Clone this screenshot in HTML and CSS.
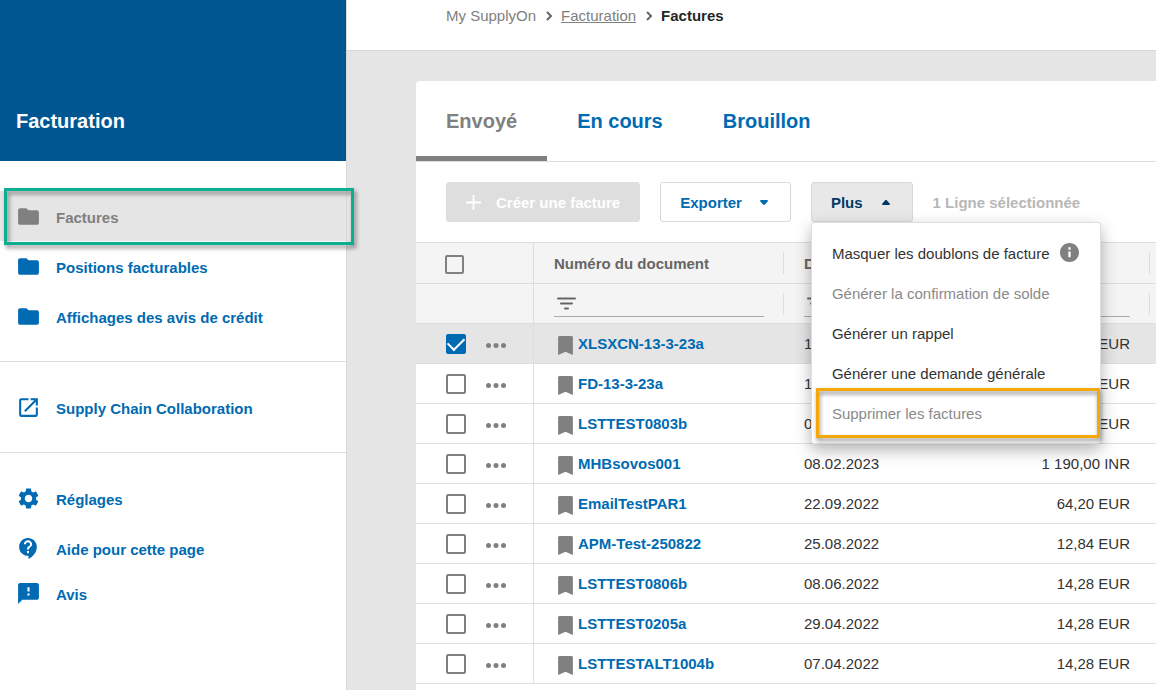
FILE: index.html
```html
<!DOCTYPE html>
<html lang="fr">
<head>
<meta charset="utf-8">
<meta name="viewport" content="width=device-width, initial-scale=1">
<title>Factures</title>
<link rel="stylesheet" href="styles.css">
</head>
<body>
<svg class="sprite" aria-hidden="true">
  <symbol id="folder" viewBox="0 0 24 24"><path d="M10 4H4c-1.1 0-1.99.9-1.99 2L2 18c0 1.1.9 2 2 2h16c1.1 0 2-.9 2-2V8c0-1.1-.9-2-2-2h-8l-2-2z"/></symbol>
  <symbol id="external" viewBox="0 0 24 24"><path d="M19 19H5V5h7V3H5c-1.11 0-2 .9-2 2v14c0 1.1.89 2 2 2h14c1.1 0 2-.9 2-2v-7h-2v7zM14 3v2h3.59l-9.83 9.83 1.41 1.41L19 6.41V10h2V3h-7z"/></symbol>
  <symbol id="gear" viewBox="0 0 24 24"><path d="M19.14 12.94c.04-.3.06-.61.06-.94 0-.32-.02-.64-.07-.94l2.03-1.58c.18-.14.23-.41.12-.61l-1.92-3.32c-.12-.22-.37-.29-.59-.22l-2.39.96c-.5-.38-1.03-.7-1.62-.94l-.36-2.54c-.04-.24-.24-.41-.48-.41h-3.84c-.24 0-.43.17-.47.41l-.36 2.54c-.59.24-1.13.57-1.62.94l-2.39-.96c-.22-.08-.47 0-.59.22L2.74 8.87c-.12.21-.08.47.12.61l2.03 1.58c-.05.3-.09.63-.09.94s.02.64.07.94l-2.03 1.58c-.18.14-.23.41-.12.61l1.92 3.32c.12.22.37.29.59.22l2.39-.96c.5.38 1.03.7 1.62.94l.36 2.54c.05.24.24.41.48.41h3.84c.24 0 .44-.17.47-.41l.36-2.54c.59-.24 1.13-.56 1.62-.94l2.39.96c.22.08.47 0 .59-.22l1.92-3.32c.12-.22.07-.47-.12-.61l-2.01-1.58zM12 15.6c-1.98 0-3.6-1.62-3.6-3.6s1.62-3.6 3.6-3.6 3.6 1.62 3.6 3.6-1.62 3.6-3.6 3.6z"/></symbol>
  <symbol id="help" viewBox="0 0 24 24"><path d="M11.5 2C6.81 2 3 5.81 3 10.5S6.81 19 11.5 19h.5v3c4.86-2.34 8-7 8-11.5C20 5.81 16.19 2 11.5 2zm1 14.5h-2v-2h2v2zm0-3.5h-2c0-3.25 3-3 3-5 0-1.1-.9-2-2-2s-2 .9-2 2h-2c0-2.21 1.79-4 4-4s4 1.79 4 4c0 2.5-3 2.75-3 5z"/></symbol>
  <symbol id="feedback" viewBox="0 0 24 24"><path d="M20 2H4c-1.1 0-1.99.9-1.99 2L2 22l4-4h14c1.1 0 2-.9 2-2V4c0-1.1-.9-2-2-2zm-7 12h-2v-2h2v2zm0-4h-2V6h2v4z"/></symbol>
  <symbol id="bookmark" viewBox="5 3 14 18"><path d="M17 3H7c-1.100 0-2 .4-2 1.200V21l7-3 7 3V4.200C19 3.400 18.100 3 17 3z"/></symbol>
  <symbol id="chevron" viewBox="0 0 7 10"><path d="M1 1l4 4-4 4" fill="none" stroke="currentColor" stroke-width="2"/></symbol>
  <symbol id="plus" viewBox="0 0 16 16"><path d="M7 0h2v7h7v2H9v7H7V9H0V7h7z"/></symbol>
  <symbol id="caret-down" viewBox="0 0 8 6"><path d="M1 0h6c1 0 1.200 1 .6 1.600L5 4.500c-.6.600-1.400.600-2 0L.4 1.600C-.2 1 0 0 1 0z"/></symbol>
  <symbol id="caret-up" viewBox="0 0 8 6"><path d="M1 5h6c1 0 1.200-1 .6-1.600L5 .5c-.6-.6-1.400-.6-2 0L.4 3.400C-.2 4 0 5 1 5z"/></symbol>
  <symbol id="filter" viewBox="0 0 19 13"><path d="M1 1.500h17M4 6.500h11M8 11.500h3" fill="none" stroke="currentColor" stroke-width="2" stroke-linecap="round"/></symbol>
  <symbol id="dots" viewBox="0 0 20 5"><circle cx="2.500" cy="2.500" r="2.500"/><circle cx="10" cy="2.500" r="2.500"/><circle cx="17.500" cy="2.500" r="2.500"/></symbol>
  <symbol id="info" viewBox="2 2 20 20"><path d="M12 2C6.480 2 2 6.480 2 12s4.480 10 10 10 10-4.480 10-10S17.520 2 12 2zm1.200 15h-2.400v-6h2.400v6zm0-8h-2.400V6.600h2.400V9z"/></symbol>
</svg>

<aside class="sidebar">
  <div class="sidebar-head"><h1 class="app-title">Facturation</h1></div>
  <nav class="nav">
    <div class="nav-group">
      <a class="nav-item selected" href="#factures"><svg class="nav-icon"><use href="#folder"/></svg>Factures</a>
      <a class="nav-item" href="#positions"><svg class="nav-icon"><use href="#folder"/></svg>Positions facturables</a>
      <a class="nav-item" href="#credits"><svg class="nav-icon"><use href="#folder"/></svg>Affichages des avis de crédit</a>
    </div>
    <div class="nav-group">
      <a class="nav-item" href="#scc"><svg class="nav-icon"><use href="#external"/></svg>Supply Chain Collaboration</a>
    </div>
    <div class="nav-group">
      <a class="nav-item" href="#reglages"><svg class="nav-icon"><use href="#gear"/></svg>Réglages</a>
      <a class="nav-item" href="#aide"><svg class="nav-icon"><use href="#help"/></svg>Aide pour cette page</a>
      <a class="nav-item compact" href="#avis"><svg class="nav-icon"><use href="#feedback"/></svg>Avis</a>
    </div>
  </nav>
</aside>

<main class="main">
  <header class="breadcrumb">
    <span>My SupplyOn</span>
    <svg class="chevron"><use href="#chevron"/></svg>
    <a class="crumb-link" href="#facturation">Facturation</a>
    <svg class="chevron"><use href="#chevron"/></svg>
    <strong class="crumb-current">Factures</strong>
  </header>

  <section class="card">
    <div class="tabs" role="tablist">
      <button class="tab active" role="tab" aria-selected="true">Envoyé</button>
      <button class="tab" role="tab" aria-selected="false">En cours</button>
      <button class="tab" role="tab" aria-selected="false">Brouillon</button>
    </div>

    <div class="toolbar">
      <button class="btn create" disabled><svg class="plus"><use href="#plus"/></svg>Créer une facture</button>
      <button class="btn">Exporter<svg class="caret"><use href="#caret-down"/></svg></button>
      <div class="dropdown">
        <button class="btn open" aria-haspopup="menu" aria-expanded="true">Plus<svg class="caret"><use href="#caret-up"/></svg></button>
        <div class="menu" role="menu">
          <button class="menu-item" role="menuitem">Masquer les doublons de facture<svg class="info"><use href="#info"/></svg></button>
          <button class="menu-item" role="menuitem" disabled>Générer la confirmation de solde</button>
          <button class="menu-item" role="menuitem">Générer un rappel</button>
          <button class="menu-item" role="menuitem">Générer une demande générale</button>
          <button class="menu-item marked" role="menuitem" disabled>Supprimer les factures</button>
        </div>
      </div>
      <span class="selection">1 Ligne sélectionnée</span>
    </div>

    <table class="grid">
      <colgroup><col class="col-select"><col class="col-number"><col><col><col class="col-rest"></colgroup>
      <thead>
        <tr>
          <th class="select"><input class="check small" type="checkbox" aria-label="Tout sélectionner"></th>
          <th class="split" scope="col">Numéro du document</th>
          <th class="split" scope="col">Date</th>
          <th class="split" scope="col">Montant</th>
          <td></td>
        </tr>
        <tr>
          <td class="select"></td>
          <td class="split"><label class="filter"><svg class="filter-icon"><use href="#filter"/></svg><input class="filter-input" type="text" aria-label="Filtrer par numéro"></label></td>
          <td class="split"><label class="filter"><svg class="filter-icon"><use href="#filter"/></svg><input class="filter-input" type="text" aria-label="Filtrer par date"></label></td>
          <td class="split"><label class="filter"><svg class="filter-icon"><use href="#filter"/></svg><input class="filter-input" type="text" aria-label="Filtrer par montant"></label></td>
          <td></td>
        </tr>
      </thead>
      <tbody>
        <tr class="picked">
          <td class="select"><div class="row-tools"><input class="check" type="checkbox" aria-label="XLSXCN-13-3-23a" checked><button class="more" aria-label="Actions"><svg class="dots"><use href="#dots"/></svg></button></div></td>
          <td><a class="doc" href="#d1"><svg class="bookmark"><use href="#bookmark"/></svg>XLSXCN-13-3-23a</a></td>
          <td>13.03.2023</td><td class="amount">14,28 EUR</td><td></td>
        </tr>
        <tr>
          <td class="select"><div class="row-tools"><input class="check" type="checkbox" aria-label="FD-13-3-23a"><button class="more" aria-label="Actions"><svg class="dots"><use href="#dots"/></svg></button></div></td>
          <td><a class="doc" href="#d2"><svg class="bookmark"><use href="#bookmark"/></svg>FD-13-3-23a</a></td>
          <td>13.03.2023</td><td class="amount">14,28 EUR</td><td></td>
        </tr>
        <tr>
          <td class="select"><div class="row-tools"><input class="check" type="checkbox" aria-label="LSTTEST0803b"><button class="more" aria-label="Actions"><svg class="dots"><use href="#dots"/></svg></button></div></td>
          <td><a class="doc" href="#d3"><svg class="bookmark"><use href="#bookmark"/></svg>LSTTEST0803b</a></td>
          <td>08.03.2023</td><td class="amount">14,28 EUR</td><td></td>
        </tr>
        <tr>
          <td class="select"><div class="row-tools"><input class="check" type="checkbox" aria-label="MHBsovos001"><button class="more" aria-label="Actions"><svg class="dots"><use href="#dots"/></svg></button></div></td>
          <td><a class="doc" href="#d4"><svg class="bookmark"><use href="#bookmark"/></svg>MHBsovos001</a></td>
          <td>08.02.2023</td><td class="amount">1 190,00 INR</td><td></td>
        </tr>
        <tr>
          <td class="select"><div class="row-tools"><input class="check" type="checkbox" aria-label="EmailTestPAR1"><button class="more" aria-label="Actions"><svg class="dots"><use href="#dots"/></svg></button></div></td>
          <td><a class="doc" href="#d5"><svg class="bookmark"><use href="#bookmark"/></svg>EmailTestPAR1</a></td>
          <td>22.09.2022</td><td class="amount">64,20 EUR</td><td></td>
        </tr>
        <tr>
          <td class="select"><div class="row-tools"><input class="check" type="checkbox" aria-label="APM-Test-250822"><button class="more" aria-label="Actions"><svg class="dots"><use href="#dots"/></svg></button></div></td>
          <td><a class="doc" href="#d6"><svg class="bookmark"><use href="#bookmark"/></svg>APM-Test-250822</a></td>
          <td>25.08.2022</td><td class="amount">12,84 EUR</td><td></td>
        </tr>
        <tr>
          <td class="select"><div class="row-tools"><input class="check" type="checkbox" aria-label="LSTTEST0806b"><button class="more" aria-label="Actions"><svg class="dots"><use href="#dots"/></svg></button></div></td>
          <td><a class="doc" href="#d7"><svg class="bookmark"><use href="#bookmark"/></svg>LSTTEST0806b</a></td>
          <td>08.06.2022</td><td class="amount">14,28 EUR</td><td></td>
        </tr>
        <tr>
          <td class="select"><div class="row-tools"><input class="check" type="checkbox" aria-label="LSTTEST0205a"><button class="more" aria-label="Actions"><svg class="dots"><use href="#dots"/></svg></button></div></td>
          <td><a class="doc" href="#d8"><svg class="bookmark"><use href="#bookmark"/></svg>LSTTEST0205a</a></td>
          <td>29.04.2022</td><td class="amount">14,28 EUR</td><td></td>
        </tr>
        <tr>
          <td class="select"><div class="row-tools"><input class="check" type="checkbox" aria-label="LSTTESTALT1004b"><button class="more" aria-label="Actions"><svg class="dots"><use href="#dots"/></svg></button></div></td>
          <td><a class="doc" href="#d9"><svg class="bookmark"><use href="#bookmark"/></svg>LSTTESTALT1004b</a></td>
          <td>07.04.2022</td><td class="amount">14,28 EUR</td><td></td>
        </tr>
      </tbody>
    </table>
  </section>
</main>
</body>
</html>
```

FILE: styles.css
```css
:root {
  --blue: #006bb3;
  --navy: #005691;
  --gray: #808080;
  --line: #dedede;
  --page: #e5e5e5;
}

* { box-sizing: border-box; }

body {
  margin: 0;
  min-height: 100vh;
  display: grid;
  grid-template-columns: 347px minmax(0, 1fr);
  background: var(--page);
  color: #333;
  font: 15px/20px "Liberation Sans", Arial, sans-serif;
}

button, input { font: inherit; color: inherit; }
button { border: 0; background: none; padding: 0; text-align: left; }
a { color: inherit; text-decoration: none; }
svg { fill: currentColor; flex: none; display: block; }
.sprite { display: none; }

/* Sidebar */
.sidebar {
  position: relative;
  z-index: 1;
  background: #fff;
  border-right: 1px solid #d8d8d8;
}
.sidebar-head {
  height: 161px;
  padding: 0 16px 28px;
  display: flex;
  align-items: flex-end;
  background: var(--navy);
  color: #fff;
}
.app-title { margin: 0; font-size: 20px; line-height: 24px; }
.nav-group { padding: 20px 0; border-bottom: 1px solid var(--line); }
.nav-group:first-child { padding-top: 30px; }
.nav-group:last-child { border-bottom: 0; }
.nav-item {
  position: relative;
  height: 50px;
  padding: 4px 16px 0;
  display: flex;
  align-items: center;
  gap: 15px;
  color: var(--blue);
  font-weight: bold;
}
.nav-item.compact { height: 40px; }
.nav-icon { width: 25px; height: 25px; margin-bottom: 4px; }
.nav-item.selected { background: var(--page); color: var(--gray); }
.nav-item.selected::after {
  content: "";
  position: absolute;
  inset: -3px -8px -4px 4px;
  border: 3px solid #0bae8e;
  filter: drop-shadow(2px 3px 2px rgba(0, 0, 0, .45));
}

/* Main column */
.main { display: flex; flex-direction: column; }
.breadcrumb {
  height: 51px;
  padding: 6px 0 0 99px;
  display: flex;
  background: #fff;
  border-bottom: 1px solid #d8d8d8;
  color: var(--gray);
}
.chevron { width: 7px; height: 10px; margin: 5px 8px 5px 10px; color: #666; }
.crumb-link { text-decoration: underline; }
.crumb-current { color: #262626; }

.card {
  flex: 1;
  margin: 30px 0 0 69px;
  background: #fff;
  border-top-left-radius: 4px;
}
.tabs { display: flex; border-bottom: 1px solid var(--line); }
.tab {
  height: 80px;
  padding: 5px 30px 0;
  border-bottom: 5px solid transparent;
  color: var(--blue);
  font-size: 20px;
  font-weight: bold;
}
.tab.active { color: var(--gray); border-bottom-color: var(--gray); }

.toolbar {
  padding: 20px 30px;
  display: flex;
  align-items: center;
  gap: 20px;
}
.btn {
  height: 40px;
  padding: 1px 22px 0 19px;
  display: flex;
  align-items: center;
  gap: 18px;
  border: 1px solid #d8d8d8;
  border-radius: 3px;
  color: var(--blue);
  font-weight: bold;
}
.btn.create {
  padding-right: 19px;
  gap: 15px;
  background: #dedede;
  border-color: #dedede;
  color: #fff;
}
.btn.open { gap: 19px; background: #e8e8e8; color: #003a63; }
.plus { width: 15px; height: 15px; }
.caret { width: 8px; height: 6px; }
.selection { padding-top: 2px; color: #b8b8b8; font-weight: bold; }

.dropdown { position: relative; }
.menu {
  position: absolute;
  z-index: 2;
  top: 100%;
  left: 0;
  width: 290px;
  padding: 10px 0;
  background: #fff;
  border: 1px solid var(--line);
  border-radius: 3px;
  box-shadow: 0 6px 16px rgba(0, 0, 0, .3);
}
.menu-item {
  position: relative;
  width: 100%;
  height: 40px;
  padding: 2px 20px 0;
  display: flex;
  align-items: center;
  gap: 10px;
  white-space: nowrap;
}
.menu-item:disabled { color: #8a8a8a; }
.info { width: 19px; height: 19px; margin-bottom: 4px; color: var(--gray); }
.menu-item.marked::after {
  content: "";
  position: absolute;
  inset: -5px 0 -5px 4px;
  border: 3px solid #f5a80b;
  filter: drop-shadow(1px 3px 2px rgba(0, 0, 0, .45));
}

/* Table */
.grid {
  width: 100%;
  table-layout: fixed;
  border-spacing: 0;
  border-top: 1px solid var(--line);
}
.col-select { width: 118px; }
.col-number { width: 250px; }
.col-rest { width: 6px; }
.grid th, .grid td {
  height: 40px;
  padding: 0 20px;
  border-bottom: 1px solid var(--line);
  text-align: left;
  white-space: nowrap;
}
.grid td:last-child { padding: 0; }
.grid thead tr { background: #f4f4f4; color: #666; }
.grid thead tr:first-child > * { height: 41px; padding-top: 2px; }
.grid .split {
  background: linear-gradient(var(--line), var(--line)) no-repeat right center / 1px 22px;
}
.grid .select { padding: 0 0 0 29px; border-right: 1px solid var(--line); }
.grid .amount { text-align: right; }
.picked { background: var(--page); }

.filter {
  height: 27px;
  display: flex;
  align-items: center;
  border-bottom: 1px solid #aaa;
}
.filter-icon { width: 19px; height: 13px; margin: 0 4px 0 3px; }
.filter-input {
  min-width: 0;
  flex: 1;
  border: 0;
  padding: 0;
  background: none;
  outline: none;
}

.row-tools { display: flex; align-items: center; gap: 20px; padding-left: 1px; }
.check {
  appearance: none;
  display: block;
  width: 20px;
  height: 20px;
  margin: 0;
  border: 2px solid var(--gray);
  border-radius: 2px;
}
.check.small { width: 19px; height: 19px; }
.check:checked {
  display: grid;
  place-items: center;
  border-color: var(--blue);
  background: var(--blue);
}
.check:checked::before {
  content: "";
  width: 14px;
  height: 8px;
  margin-bottom: 4px;
  border: solid #fff;
  border-width: 0 0 2px 2px;
  rotate: -45deg;
}
.more { padding-top: 3px; }
.dots { width: 20px; height: 5px; color: var(--gray); }
.doc { display: flex; align-items: center; color: var(--blue); font-weight: bold; }
.bookmark { width: 15px; height: 19px; margin: 4px 5px 0 4px; color: var(--gray); }
```
